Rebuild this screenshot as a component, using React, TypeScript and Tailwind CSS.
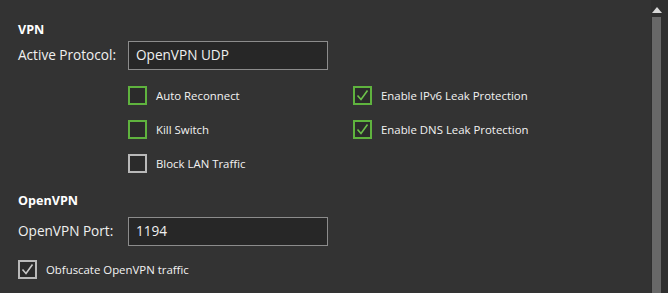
import React from "react";

type CheckProps = {
    label: string;
    checked?: boolean;
    green?: boolean;
};

function Check({ label, checked = false, green = true }: CheckProps) {
    const border = green ? "border-[#5fb33e]" : "border-[#b9b9b9]";
    const stroke = green ? "#6cc04a" : "#c8c8c8";
    return (
        <div className="flex items-center h-[19px]">
            <div className={`w-[19px] h-[19px] border-2 ${border} bg-[#2b2b2b] flex items-center justify-center`}>
                {checked && (
                    <svg width="15" height="15" viewBox="0 0 15 15">
                        <path d="M2.5 7.5 L6 11.5 L12.5 2.5" fill="none" stroke={stroke} strokeWidth="1.6" />
                    </svg>
                )}
            </div>
            <span className="ml-[9px] text-[11.4px] text-[#f2f2f2]">{label}</span>
        </div>
    );
}

export default function App() {
    return (
        <div className="w-[668px] h-[293px] bg-[#333333] flex overflow-hidden font-['Open_Sans','Noto_Sans',sans-serif]">
            {/* Content */}
            <div className="flex-1 pl-[18px] pt-[20px]">
                <h3 className="text-[12.6px] font-bold text-white leading-[20px]">VPN</h3>
                <div className="flex items-center mt-[1px]">
                    <span className="w-[110px] text-[13.6px] text-[#f0f0f0]">Active Protocol:</span>
                    <div className="w-[200px] h-[29px] border border-[#8c8c8c] bg-[#272727] flex items-center pl-[7px] text-[13.6px] text-[#f0f0f0]">
                        OpenVPN UDP
                    </div>
                </div>

                <div className="ml-[110px] mt-[16px] grid grid-cols-[225px_1fr] gap-y-[15px]">
                    <Check label="Auto Reconnect" />
                    <Check label="Enable IPv6 Leak Protection" checked />
                    <Check label="Kill Switch" />
                    <Check label="Enable DNS Leak Protection" checked />
                    <Check label="Block LAN Traffic" green={false} />
                </div>

                <h3 className="mt-[18px] text-[12.6px] font-bold text-white leading-[20px]">OpenVPN</h3>
                <div className="flex items-center mt-[6px]">
                    <span className="w-[110px] text-[13.6px] text-[#f0f0f0]">OpenVPN Port:</span>
                    <div className="w-[200px] h-[29px] border border-[#8c8c8c] bg-[#272727] flex items-center pl-[7px] text-[13.6px] text-[#f0f0f0]">
                        1194
                    </div>
                </div>
                <div className="mt-[14px]">
                    <Check label="Obfuscate OpenVPN traffic" checked green={false} />
                </div>
            </div>

            {/* Scrollbar */}
            <div className="w-[17px] bg-[#2f2f2f] flex flex-col items-start pt-[7px] pl-[1px]">
                <svg width="10" height="6" viewBox="0 0 10 6">
                    <path d="M0 6 L5 0 L10 6 Z" fill="#d8d8d8" />
                </svg>
                <div className="mt-[4px] w-[9px] flex-1 bg-[#686868]" />
            </div>
        </div>
    );
}
